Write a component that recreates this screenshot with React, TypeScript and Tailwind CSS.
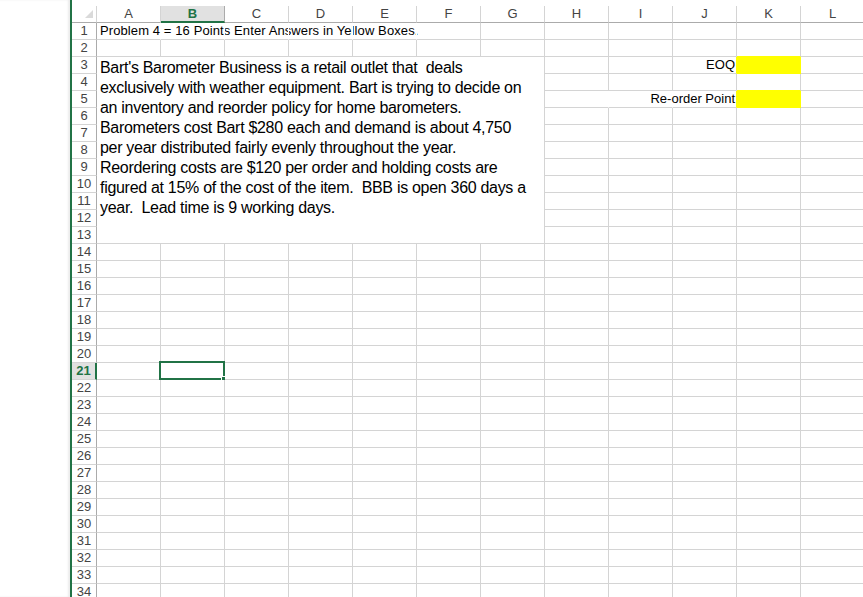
import type { ReactNode } from "react";

const COLUMNS = ["A", "B", "C", "D", "E", "F", "G", "H", "I", "J", "K", "L"];
const ROW_COUNT = 34;
const YELLOW_CELLS = ["K3", "K5"];

const PROBLEM_LINES = [
  "Bart's Barometer Business is a retail outlet that  deals",
  "exclusively with weather equipment. Bart is trying to decide on",
  "an inventory and reorder policy for home barometers.",
  "Barometers cost Bart $280 each and demand is about 4,750",
  "per year distributed fairly evenly throughout the year.",
  "Reordering costs are $120 per order and holding costs are",
  "figured at 15% of the cost of the item.  BBB is open 360 days a",
  "year.  Lead time is 9 working days.",
];

// gridlines that Excel hides because text runs over them or a fill covers them
function rightBorder(col: string, row: number) {
  if (row === 1 && ["A", "B", "C", "D", "E"].includes(col)) return "border-r-white";
  if (row === 5 && ["H", "I"].includes(col)) return "border-r-white";
  if ((row === 3 || row === 5) && (col === "J" || col === "K")) return "border-r-[#ffff00]";
  return "border-r-[#d4d4d4]";
}

function bottomBorder(col: string, row: number) {
  if (col === "K" && [2, 3, 4, 5].includes(row)) return "border-b-[#ffff00]";
  return "border-b-[#d4d4d4]";
}

function Cell({ col, row, children }: { col: string; row: number; children?: ReactNode }) {
  const yellow = YELLOW_CELLS.includes(`${col}${row}`);

  return (
    <div
      className={`relative flex items-center border-r border-b whitespace-nowrap ${rightBorder(col, row)} ${bottomBorder(col, row)} ${
        yellow ? "bg-[#ffff00]" : ""
      }`}
    >
      {children}
    </div>
  );
}

function cellContent(col: string, row: number) {
  if (col === "A" && row === 1) {
    return (
      <span className="pl-[3px] text-[13px] tracking-[0.1px] text-black">
        Problem 4 = 16 Points Enter Answers in Yellow Boxes.
      </span>
    );
  }

  if (col === "J" && row === 3) {
    return <span className="ml-auto pr-[1px] text-[13px] text-black">EOQ</span>;
  }

  if (col === "J" && row === 5) {
    return (
      <div className="flex w-full justify-end pr-[1px]">
        <span className="text-[13px] text-black">Re-order Point</span>
      </div>
    );
  }

  if (col === "B" && row === 21) {
    return (
      <div className="absolute -top-[2px] -left-[2px] -right-[1px] -bottom-[1px] border-2 border-[#217346]">
        <div className="absolute -right-[3px] -bottom-[3px] h-[5px] w-[5px] border border-white bg-[#217346]" />
      </div>
    );
  }

  return null;
}

export default function App() {
  const rows = Array.from({ length: ROW_COUNT }, (_, index) => index + 1);

  return (
    <div className="flex h-[597px] w-[863px] overflow-hidden bg-white font-['Liberation_Sans',Arial,sans-serif]">
      <div className="w-[70px] shrink-0 bg-white shadow-[inset_-2px_0_2px_rgba(0,0,0,0.08)]" />
      <div className="w-[2px] shrink-0 bg-[#217346]" />

      <div className="flex flex-col">
        <div className="h-[6px] shrink-0" />

        <div className="grid shrink-0 grid-cols-[25px_repeat(12,64px)] grid-rows-[17px_repeat(34,17px)]">
          <div className="relative border-r border-b border-r-[#d4d4d4] border-b-[#ababab]">
            <div className="absolute right-[3px] bottom-[4px] h-0 w-0 border-b-[8px] border-l-[8px] border-b-[#dadada] border-l-transparent" />
          </div>

          {COLUMNS.map((col) =>
            col === "B" ? (
              <div
                key={col}
                className="flex items-center justify-center border-r border-b-2 border-r-[#ababab] border-b-[#217346] bg-[#e1e1e1] text-[13px] font-bold text-[#217346]"
              >
                {col}
              </div>
            ) : (
              <div
                key={col}
                className="flex items-center justify-center border-r border-b border-r-[#d4d4d4] border-b-[#ababab] text-[13px] text-[#444444]"
              >
                {col}
              </div>
            )
          )}

          <div className="col-span-7 col-start-2 row-span-11 row-start-4 border-r border-b border-[#d4d4d4] pt-[1px] pl-[3px] text-[16px] leading-[20px] tracking-[-0.3px] text-black">
            {PROBLEM_LINES.map((line) => (
              <div key={line} className="whitespace-pre">
                {line}
              </div>
            ))}
          </div>

          {rows.map((row) => [
            row === 21 ? (
              <div
                key={`h${row}`}
                className="flex items-center justify-center border-r-2 border-b border-r-[#217346] border-b-[#d4d4d4] bg-[#e1e1e1] text-[13px] font-bold text-[#217346]"
              >
                {row}
              </div>
            ) : (
              <div
                key={`h${row}`}
                className="flex items-center justify-center border-r border-b border-r-[#ababab] border-b-[#d4d4d4] text-[13px] text-[#444444]"
              >
                {row}
              </div>
            ),
            ...COLUMNS.filter(
              (col) => !(row >= 3 && row <= 13 && ["A", "B", "C", "D", "E", "F", "G"].includes(col))
            ).map((col) => (
              <Cell key={`${col}${row}`} col={col} row={row}>
                {cellContent(col, row)}
              </Cell>
            )),
          ])}
        </div>
      </div>
    </div>
  );
}
